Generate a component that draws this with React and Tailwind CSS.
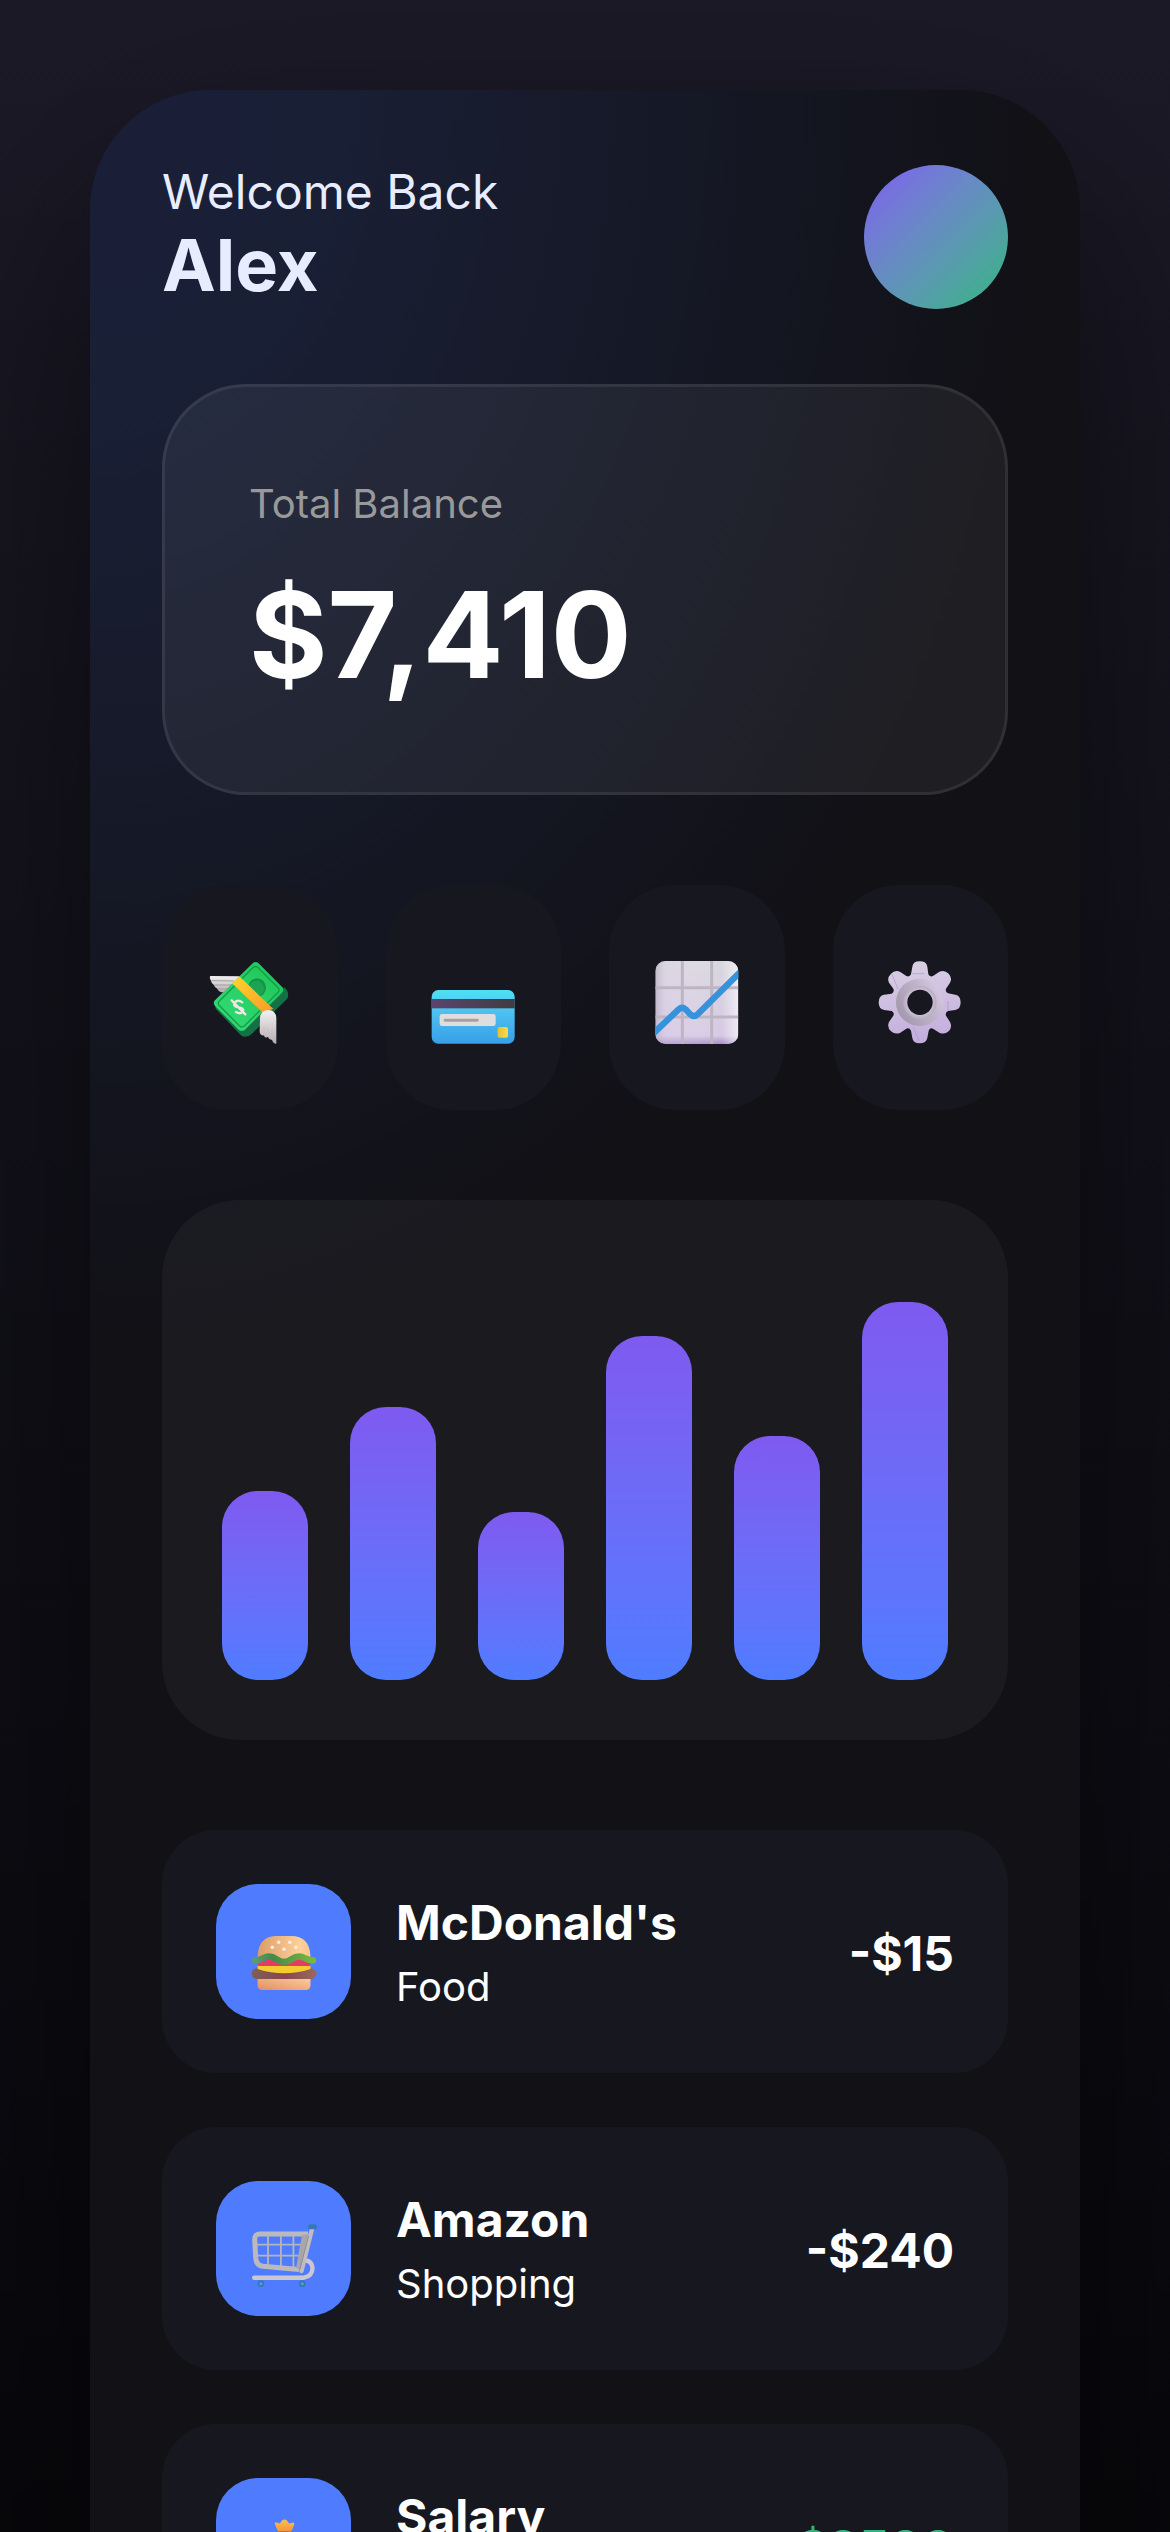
const money = (
  <svg viewBox="83 90 252 252" className="size-[84px]" aria-hidden="true">
    <defs>
      <linearGradient id="m-top" x1="0" y1="1" x2="1" y2="0">
        <stop offset="0" stopColor="#35dc78" />
        <stop offset="1" stopColor="#1cc556" />
      </linearGradient>
      <linearGradient id="m-band" x1="0" y1="0" x2="1" y2="1">
        <stop offset="0" stopColor="#ffd52e" />
        <stop offset="1" stopColor="#fb9a26" />
      </linearGradient>
      <linearGradient id="m-wing" x1="0" y1="0" x2="0" y2="1">
        <stop offset="0" stopColor="#f4f1f2" />
        <stop offset="1" stopColor="#b5adb0" />
      </linearGradient>
    </defs>
    <path d="M90 138 L176 139 L170 186 L124 187 Q113 184 112 177 Q102 173 101 165 Q92 158 92 152 Q86 143 90 138Z" fill="url(#m-wing)" />
    <path d="M94 152 L160 153 M102 165 L160 165 M112 177 L150 177" stroke="#a39c9f" strokeWidth="3" />
    <path d="M104 222 L308 176 L312 172 Q326 184 323 200 Q322 206 316 211 L214 312 Q196 328 180 314 L106 236Z" fill="#147045" />
    <path d="M218 99 Q226 93 234 99 L306 172 Q312 180 305 188 L194 299 Q184 306 175 299 L104 228 Q97 219 104 211Z" fill="url(#m-top)" />
    <path d="M219 112 Q226 107 232 112 L294 174 Q299 180 293 187 L192 288 Q184 294 178 288 L116 226 Q111 219 117 213Z" fill="none" stroke="#159c49" strokeWidth="4" />
    <ellipse cx="230" cy="173" rx="27" ry="28" fill="#169348" />
    <ellipse cx="228" cy="176" rx="23" ry="23" fill="#1ba553" />
    <path d="M155 160 L177 139 L279 237 L246 247Z" fill="url(#m-band)" />
    <path d="M154 211 L195 253 M186 217 Q172 207 163 218 Q158 229 174 232 Q192 234 188 244 Q181 254 167 246" fill="none" stroke="#eee7e4" strokeWidth="7" strokeLinecap="round" />
    <path d="M239 266 Q239 241 264 240 Q287 241 288 264 L288 341 Q278 341 275 329 Q265 329 263 320 Q253 327 251 316 Q240 318 238 306Z" fill="url(#m-wing)" />
    <path d="M251 316 V290 M263 320 V294 M275 329 V298" stroke="#c8c1c3" strokeWidth="3" />
  </svg>
);

const card = (
  <svg viewBox="64 90 252 252" className="size-[84px]" aria-hidden="true">
    <defs>
      <linearGradient id="c-body" x1="0" y1="0" x2="0" y2="1">
        <stop offset="0" stopColor="#4fe0f4" />
        <stop offset="0.35" stopColor="#50c4f0" />
        <stop offset="1" stopColor="#379fe8" />
      </linearGradient>
      <linearGradient id="c-stripe" x1="0" y1="0" x2="1" y2="0">
        <stop offset="0" stopColor="#5c4470" />
        <stop offset="1" stopColor="#403c3f" />
      </linearGradient>
      <linearGradient id="c-chip" x1="0" y1="0" x2="1" y2="0">
        <stop offset="0" stopColor="#e9bd38" />
        <stop offset="1" stopColor="#fadb48" />
      </linearGradient>
    </defs>
    <rect x="66" y="180" width="249" height="161" rx="20" fill="url(#c-body)" />
    <rect x="66" y="207" width="249" height="28" fill="url(#c-stripe)" />
    <rect x="90" y="252" width="168" height="36" rx="7" fill="#e0dddf" />
    <rect x="102" y="266" width="105" height="9" rx="4" fill="#a5a0a2" />
    <rect x="264" y="291" width="31" height="32" rx="6" fill="url(#c-chip)" />
  </svg>
);

const chart = (
  <svg viewBox="74 90 252 252" className="size-[84px]" aria-hidden="true">
    <defs>
      <linearGradient id="g-body" x1="0" y1="0" x2="0" y2="1">
        <stop offset="0" stopColor="#d9d7de" />
        <stop offset="0.9" stopColor="#d6c9e4" />
        <stop offset="1" stopColor="#a98fc8" />
      </linearGradient>
      <linearGradient id="g-edge" x1="0" y1="0" x2="1" y2="0">
        <stop offset="0" stopColor="#a9a2b0" stopOpacity="0.5" />
        <stop offset="0.12" stopColor="#e0d4ee" stopOpacity="0.3" />
        <stop offset="0.8" stopColor="#fff" stopOpacity="0" />
        <stop offset="1" stopColor="#fff" stopOpacity="0.6" />
      </linearGradient>
      <clipPath id="g-clip">
        <rect x="75" y="93" width="249" height="249" rx="30" />
      </clipPath>
    </defs>
    <g clipPath="url(#g-clip)">
      <rect x="75" y="93" width="249" height="249" fill="url(#g-body)" />
      <rect x="75" y="93" width="249" height="249" fill="url(#g-edge)" />
      <path d="M156 93 V342 M244 93 V342 M75 173 H324 M75 261 H324" stroke="#beb5c3" strokeWidth="9" />
      <path d="M66 313 L145 238 Q155 229 166 238 L180 253 Q191 264 202 253 L334 122" fill="none" stroke="#3593dc" strokeWidth="19" />
    </g>
  </svg>
);

const gear = (
  <svg viewBox="85 90 252 252" className="size-[84px]" aria-hidden="true">
    <defs>
      <linearGradient id="s-body" gradientUnits="userSpaceOnUse" x1="180" y1="94" x2="210" y2="340">
        <stop offset="0" stopColor="#d9cfe4" />
        <stop offset="1" stopColor="#c3addd" />
      </linearGradient>
      <linearGradient id="s-ring" x1="1" y1="0" x2="0" y2="0.6">
        <stop offset="0" stopColor="#ddd0ea" />
        <stop offset="0.5" stopColor="#bfb3c9" />
        <stop offset="1" stopColor="#a499ad" />
      </linearGradient>
      <mask id="s-hole">
        <rect x="85" y="90" width="252" height="252" fill="#fff" />
        <circle cx="211" cy="217" r="38" fill="#000" />
      </mask>
    </defs>
    <g mask="url(#s-hole)">
      <path
        fill="url(#s-body)"
        d="M188 110 Q190 94 210 94 Q231 94 233 110 L236 133 Q240 142 250 138 L268 126 Q284 118 297 131 Q309 144 301 158 L289 176 Q286 186 295 190 L317 194 Q333 197 333 217 Q333 237 317 240 L295 243 Q286 247 289 257 L301 276 Q309 291 297 304 Q284 315 269 308 L250 296 Q241 292 237 302 L233 324 Q230 340 210 340 Q190 340 188 324 L184 302 Q179 292 170 296 L152 308 Q137 315 124 304 Q111 291 118 276 L131 257 Q135 247 126 243 L103 240 Q87 237 87 217 Q87 197 103 194 L126 191 Q135 186 131 176 L118 158 Q111 144 124 131 Q137 118 152 126 L170 138 Q180 142 184 133Z"
      />
      <path d="M127 133 L145 177 M188 131 H224 M295 213 V240 M190 290 L208 332" stroke="#ab98c0" strokeWidth="2" />
      <circle cx="210" cy="217" r="71" fill="url(#s-ring)" />
      <circle cx="211" cy="217" r="50" fill="#bcb0c8" />
      <circle cx="211" cy="217" r="44" fill="#c6bbd0" />
    </g>
  </svg>
);

const burger = (
  <svg viewBox="0 0 66 66" className="size-[66px]" aria-hidden="true">
    <defs>
      <linearGradient id="b-bun" x1="0" y1="0" x2="1" y2="0">
        <stop offset="0" stopColor="#dc9c66" />
        <stop offset="0.8" stopColor="#fdd09a" />
        <stop offset="1" stopColor="#f5c48c" />
      </linearGradient>
      <linearGradient id="b-base" x1="0" y1="1" x2="1" y2="0">
        <stop offset="0" stopColor="#e08a78" />
        <stop offset="0.3" stopColor="#eba274" />
        <stop offset="1" stopColor="#fbcfa0" />
      </linearGradient>
      <linearGradient id="b-leaf" x1="0" y1="0" x2="1" y2="0">
        <stop offset="0" stopColor="#5d9a74" />
        <stop offset="0.3" stopColor="#44894a" />
        <stop offset="1" stopColor="#78b93c" />
      </linearGradient>
      <linearGradient id="b-meat" x1="0" y1="0" x2="1" y2="0">
        <stop offset="0" stopColor="#7d6058" />
        <stop offset="0.5" stopColor="#8a4450" />
        <stop offset="1" stopColor="#9a6a5c" />
      </linearGradient>
    </defs>
    <path d="M6.6 52 H59.5 V60 Q59.5 65 54.5 65 H11.6 Q6.6 65 6.6 60Z" fill="url(#b-base)" />
    <rect x="0.6" y="43.2" width="65" height="10.8" rx="5.4" fill="url(#b-meat)" />
    <path d="M6.6 40 H59.5 V44 Q46 48.3 33 48.3 Q20 48.3 6.6 44Z" fill="#f4cc30" />
    <path d="M6.6 41 Q7 34 18 34 H48 Q59 34 59.5 41Z" fill="#e63a66" />
    <path d="M6.6 34 V31 Q7.5 11 26 11 H40 Q58.5 11 59.5 31 V34Z" fill="url(#b-bun)" />
    <path d="M4.2 35.5 C13 35 12 31.5 18 31.5 C25 31.5 26 37 33 37 C40 37 41 31.5 48 31.5 C54 31.5 53 35 62 35.5" fill="none" stroke="url(#b-leaf)" strokeWidth="6.4" strokeLinecap="round" />
    <g fill="#fbeee0">
      <circle cx="27.7" cy="17.3" r="1.8" />
      <circle cx="38.8" cy="17.3" r="1.8" />
      <circle cx="21.3" cy="22.3" r="1.8" />
      <circle cx="33" cy="24.3" r="1.8" />
      <circle cx="44.9" cy="22.3" r="1.8" />
    </g>
  </svg>
);

const cart = (
  <svg viewBox="0 0 66 66" className="size-[66px]" aria-hidden="true">
    <path d="M17 13 V44 M29.9 13 V45 M42.4 13 V46 M5 22.7 H50 M6 33.7 H48" stroke="#b8b4b4" strokeWidth="1.8" fill="none" />
    <path d="M3.2 55.7 H53 Q61.5 54 61.5 46 Q61 39.5 55 38.5" fill="none" stroke="#ccc5d2" strokeWidth="4.4" strokeLinecap="round" />
    <path d="M57 12 H9 Q3.5 12 3.7 17.5 L4.7 36 Q5.3 43.5 12 44.3 L48 47.5" fill="none" stroke="#bcb9bd" strokeWidth="5" strokeLinejoin="round" />
    <path d="M51 13 L45 46 L50 47 L58 12Z" fill="#a9a6aa" />
    <path d="M61 7 L50.5 49" stroke="#bfbcc2" strokeWidth="4.4" strokeLinecap="round" />
    <path d="M57.5 14 L49 47" stroke="#8e8b90" strokeWidth="1" />
    <rect x="57" y="2.3" width="9" height="5" rx="2.4" fill="#3379b8" />
    <circle cx="9.9" cy="61.7" r="3.4" fill="#3379b8" />
    <circle cx="51.3" cy="61.7" r="3.4" fill="#3379b8" />
    <circle cx="9.9" cy="61.7" r="1.5" fill="#5b9bd6" />
    <circle cx="51.3" cy="61.7" r="1.5" fill="#5b9bd6" />
  </svg>
);

const bag = (
  <svg viewBox="0 0 66 66" className="size-[66px]" aria-hidden="true">
    <defs>
      <linearGradient id="bag" x1="0" y1="0" x2="0" y2="1">
        <stop offset="0" stopColor="#fdc04a" />
        <stop offset="1" stopColor="#f0903c" />
      </linearGradient>
    </defs>
    <path d="M26 15 Q6 32 6 50 Q7 65 33 65 Q60 65 60 50 Q60 32 41 15Z" fill="url(#bag)" />
    <path d="M24 5 Q23 3 26 3.5 L29 4.5 Q31 0.5 33.5 0.5 Q36 0.5 38 4.5 L42 3.5 Q44 3.5 43 6 Q42 10 39 14 H28 Q25 9 24 5Z" fill="url(#bag)" />
    <rect x="26" y="12.5" width="14.5" height="4" rx="2" fill="#8a5147" />
    <circle cx="33" cy="42" r="11" fill="#c9702f" />
  </svg>
);

const actions = [
  { label: 'Send money', icon: money },
  { label: 'Cards', icon: card },
  { label: 'Statistics', icon: chart },
  { label: 'Settings', icon: gear },
];

const bars = [45, 65, 40, 82, 58, 90];

const transactions = [
  { name: "McDonald's", category: 'Food', amount: '-$15', icon: burger, color: 'text-white' },
  { name: 'Amazon', category: 'Shopping', amount: '-$240', icon: cart, color: 'text-white' },
  { name: 'Salary', category: 'Income', amount: '+$2500', icon: bag, color: 'text-[#2cb67d]' },
];

export default function App() {
  return (
    <div className="h-screen overflow-hidden bg-linear-to-b from-[#1c1a27] to-[#08080c] p-[90px] font-['Inter',sans-serif] text-white">
      <main className="rounded-[120px] bg-[#111116] bg-[radial-gradient(ellipse_950px_1250px_at_top_left,#1a1f38_0%,#191f35_25%,#111116_100%)] p-[72px] shadow-[0_90px_240px_rgba(0,0,0,0.5)]">
        <header className="flex items-center justify-between text-[#e8ecff]">
          <div>
            <p className="text-5xl leading-[60px]">Welcome Back</p>
            <h1 className="mb-1 text-7xl leading-[86px] font-bold">Alex</h1>
          </div>
          <div className="size-36 rounded-full bg-linear-135 from-[#7f5af0] to-[#2cb67d]" />
        </header>

        <section className="mt-[72px] rounded-[84px] border-3 border-white/8 bg-white/6 px-[84px] pt-[87px] pb-[84px]">
          <p className="text-[40px] leading-[60px] text-[#999999]">Total Balance</p>
          <p className="mt-[27px] text-[120px] leading-[147px] font-bold">$7,410</p>
        </section>

        <nav className="mt-[90px] grid grid-cols-4 gap-12" aria-label="Quick actions">
          {actions.map((a) => (
            <button
              key={a.label}
              type="button"
              aria-label={a.label}
              className="flex justify-center rounded-[66px] bg-[#17181f] pt-[75px] pb-[66px]"
            >
              {a.icon}
            </button>
          ))}
        </nav>

        <section
          className="mt-[90px] flex h-[540px] items-end gap-[42px] rounded-[78px] bg-white/4 p-[60px]"
          aria-label="Spending chart"
        >
          {bars.map((value, i) => (
            <div
              key={i}
              className="flex-1 rounded-[36px] bg-linear-to-b from-[#7f5af0] to-[#4f7cff]"
              style={{ height: `${value}%` }}
            />
          ))}
        </section>

        <ul className="mt-[90px] flex flex-col gap-[54px]">
          {transactions.map((t) => (
            <li key={t.name} className="flex items-center gap-[45px] rounded-[54px] bg-[#17181f] p-[54px]">
              <div className="flex size-[135px] items-center justify-center rounded-[42px] bg-[#4f7cff] pt-3">
                {t.icon}
              </div>
              <div className="flex-1 pt-[6px]">
                <p className="text-5xl leading-[60px] font-bold">{t.name}</p>
                <p className="mt-1 text-[40px] leading-[60px]">{t.category}</p>
              </div>
              <p className={`pt-1 text-5xl leading-[60px] font-bold ${t.color}`}>{t.amount}</p>
            </li>
          ))}
        </ul>
      </main>
    </div>
  );
}
